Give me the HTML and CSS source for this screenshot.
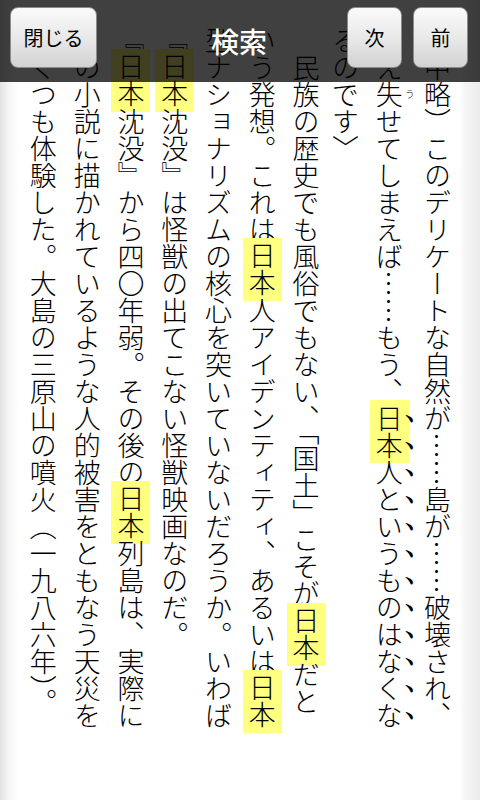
FILE: index.html
```html
<!DOCTYPE html>
<html lang="ja">
<head>
    <meta charset="UTF-8">
    <meta name="viewport" content="width=device-width, initial-scale=1.0">
    <title>検索</title>
    <link rel="stylesheet" href="styles.css">
</head>
<body>
    <div class="screen">
        <main class="page">
            <div class="col">（中略）このデリケートな自然が……島が……破壊され、</div>
            <div class="col">消え<ruby>失<rt>う</rt></ruby>せてしまえば……もう、<mark><ruby class="dot">日<rt>﹅</rt></ruby><ruby class="dot">本<rt>﹅</rt></ruby></mark><ruby class="dot">人<rt>﹅</rt></ruby><ruby class="dot">と<rt>﹅</rt></ruby><ruby class="dot">い<rt>﹅</rt></ruby><ruby class="dot">う<rt>﹅</rt></ruby><ruby class="dot">も<rt>﹅</rt></ruby><ruby class="dot">の<rt>﹅</rt></ruby><ruby class="dot">は<rt>﹅</rt></ruby><ruby class="dot">な<rt>﹅</rt></ruby><ruby class="dot">く<rt>﹅</rt></ruby><ruby class="dot">な<rt>﹅</rt></ruby></div>
            <div class="col"><ruby class="dot">る<rt>﹅</rt></ruby>のです〉</div>
            <div class="col">　民族の歴史でも風俗でもない、「国土」こそが<mark>日本</mark>だと</div>
            <div class="col">いう発想。これは<mark>日本</mark>人アイデンティティ、あるいは<mark>日本</mark></div>
            <div class="col">型ナショナリズムの核心を突いていないだろうか。いわば</div>
            <div class="col">『<mark>日本</mark>沈没』は怪獣の出てこない怪獣映画なのだ。</div>
            <div class="col">『<mark>日本</mark>沈没』から四〇年弱。その後の<mark>日本</mark>列島は、実際に</div>
            <div class="col">この小説に描かれているような人的被害をともなう天災を</div>
            <div class="col">いくつも体験した。大島の三原山の噴火（一九八六年）。</div>
        </main>

        <header class="toolbar">
            <div class="left">
                <button class="btn wide">閉じる</button>
            </div>
            <h1 class="title">検索</h1>
            <div class="right">
                <button class="btn">次</button>
                <button class="btn">前</button>
            </div>
        </header>
    </div>
</body>
</html>
```

FILE: styles.css
```css
body {
    margin: 0;
    padding: 0;
    background: white;
}

.screen {
    position: relative;
    width: 480px;
    height: 800px;
    overflow: hidden;
}

.page {
    writing-mode: vertical-rl;
    box-sizing: border-box;
    width: 480px;
    height: 800px;
    padding: 26.5px 21px;
    font-family: "Noto Sans CJK JP", sans-serif;
    font-weight: 300;
    font-size: 27px;
    color: black;
    background: linear-gradient(to right, #e2e2e2 0, #f4f4f4 8px, #fff 18px, #fff 460px, #f6f6f6 464px, #ececec 480px);
}

.col {
    width: 43.8px;
    line-height: 43.8px;
    white-space: nowrap;
}

mark {
    background: #ffff80;
    color: black;
    padding: 4.5px 0;
    margin: -4.5px 0;
}

rt {
    font-size: 10px;
    line-height: 1;
}

.dot rt {
    font-size: 11px;
}

.toolbar {
    position: absolute;
    top: 0;
    left: 0;
    right: 0;
    height: 82px;
    box-sizing: border-box;
    padding: 7px 12px 0 10px;
    display: grid;
    grid-template-columns: 1fr auto 1fr;
    align-items: start;
    background: rgba(0, 0, 0, 0.75);
}

.right {
    display: flex;
    justify-content: flex-end;
    gap: 11px;
}

.title {
    margin: 0;
    padding-top: 4px;
    line-height: 61px;
    font-family: "Noto Sans CJK JP", sans-serif;
    font-weight: 500;
    font-size: 28px;
    color: white;
}

.btn {
    width: 55px;
    height: 61px;
    padding: 0;
    border: 1px solid #8c8c8c;
    border-radius: 8px;
    background: linear-gradient(#fafafa, #e9e9e9 50%, #d2d2d2);
    font-family: "Noto Sans CJK JP", sans-serif;
    font-size: 20px;
    color: black;
}

.btn.wide {
    width: 87px;
}
```
